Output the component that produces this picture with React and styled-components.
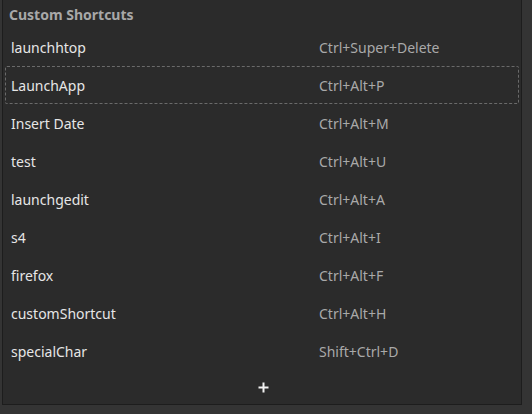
import React from 'react';
import styled, { createGlobalStyle } from 'styled-components';

const GlobalStyle = createGlobalStyle`
  html, body {
    margin: 0;
    padding: 0;
    background: #343434;
    font-family: "Noto Sans", "Open Sans", sans-serif;
  }
`;

const Page = styled.div`
  width: 532px;
  height: 414px;
  padding: 0 10px 9px 2px;
  box-sizing: border-box;
  background: #343434;
`;

const Panel = styled.div`
  height: 100%;
  box-sizing: border-box;
  background: #2b2b2b;
  border-left: 1px solid #1d1d1d;
  border-right: 1px solid #1d1d1d;
  border-bottom: 1px solid #1d1d1d;
  display: flex;
  flex-direction: column;
`;

const Header = styled.div`
  height: 28px;
  display: flex;
  align-items: center;
  padding-left: 6px;
  font-size: 14px;
  font-weight: 700;
  color: #a8a8a8;
`;

const List = styled.div`
  display: flex;
  flex-direction: column;
  padding: 0 2px;
`;

const Row = styled.div`
  height: 38px;
  box-sizing: border-box;
  display: flex;
  align-items: center;
  padding: 0 0 0 5px;
  border: 1px dashed ${(p) => (p.$focused ? '#6a6a6a' : 'transparent')};
  border-radius: 2px;
  font-size: 14px;
`;

const Name = styled.span`
  width: 308px;
  color: #e6e6e6;
`;

const Keys = styled.span`
  color: #a9a9a9;
`;

const AddRow = styled.div`
  flex: 1;
  display: flex;
  align-items: center;
  justify-content: center;
  padding-left: 2px;
`;

const shortcuts = [
  ['launchhtop', 'Ctrl+Super+Delete'],
  ['LaunchApp', 'Ctrl+Alt+P'],
  ['Insert Date', 'Ctrl+Alt+M'],
  ['test', 'Ctrl+Alt+U'],
  ['launchgedit', 'Ctrl+Alt+A'],
  ['s4', 'Ctrl+Alt+I'],
  ['firefox', 'Ctrl+Alt+F'],
  ['customShortcut', 'Ctrl+Alt+H'],
  ['specialChar', 'Shift+Ctrl+D'],
];

export default function App() {
  return (
    <>
      <GlobalStyle />
      <Page>
        <Panel>
          <Header>Custom Shortcuts</Header>
          <List>
            {shortcuts.map(([name, keys], i) => (
              <Row key={name} $focused={i === 1}>
                <Name>{name}</Name>
                <Keys>{keys}</Keys>
              </Row>
            ))}
          </List>
          <AddRow>
            <svg width="11" height="11" viewBox="0 0 11 11">
              <path d="M5.5 0.5v10M0.5 5.5h10" stroke="#f2f2f2" strokeWidth="2" />
            </svg>
          </AddRow>
        </Panel>
      </Page>
    </>
  );
}
